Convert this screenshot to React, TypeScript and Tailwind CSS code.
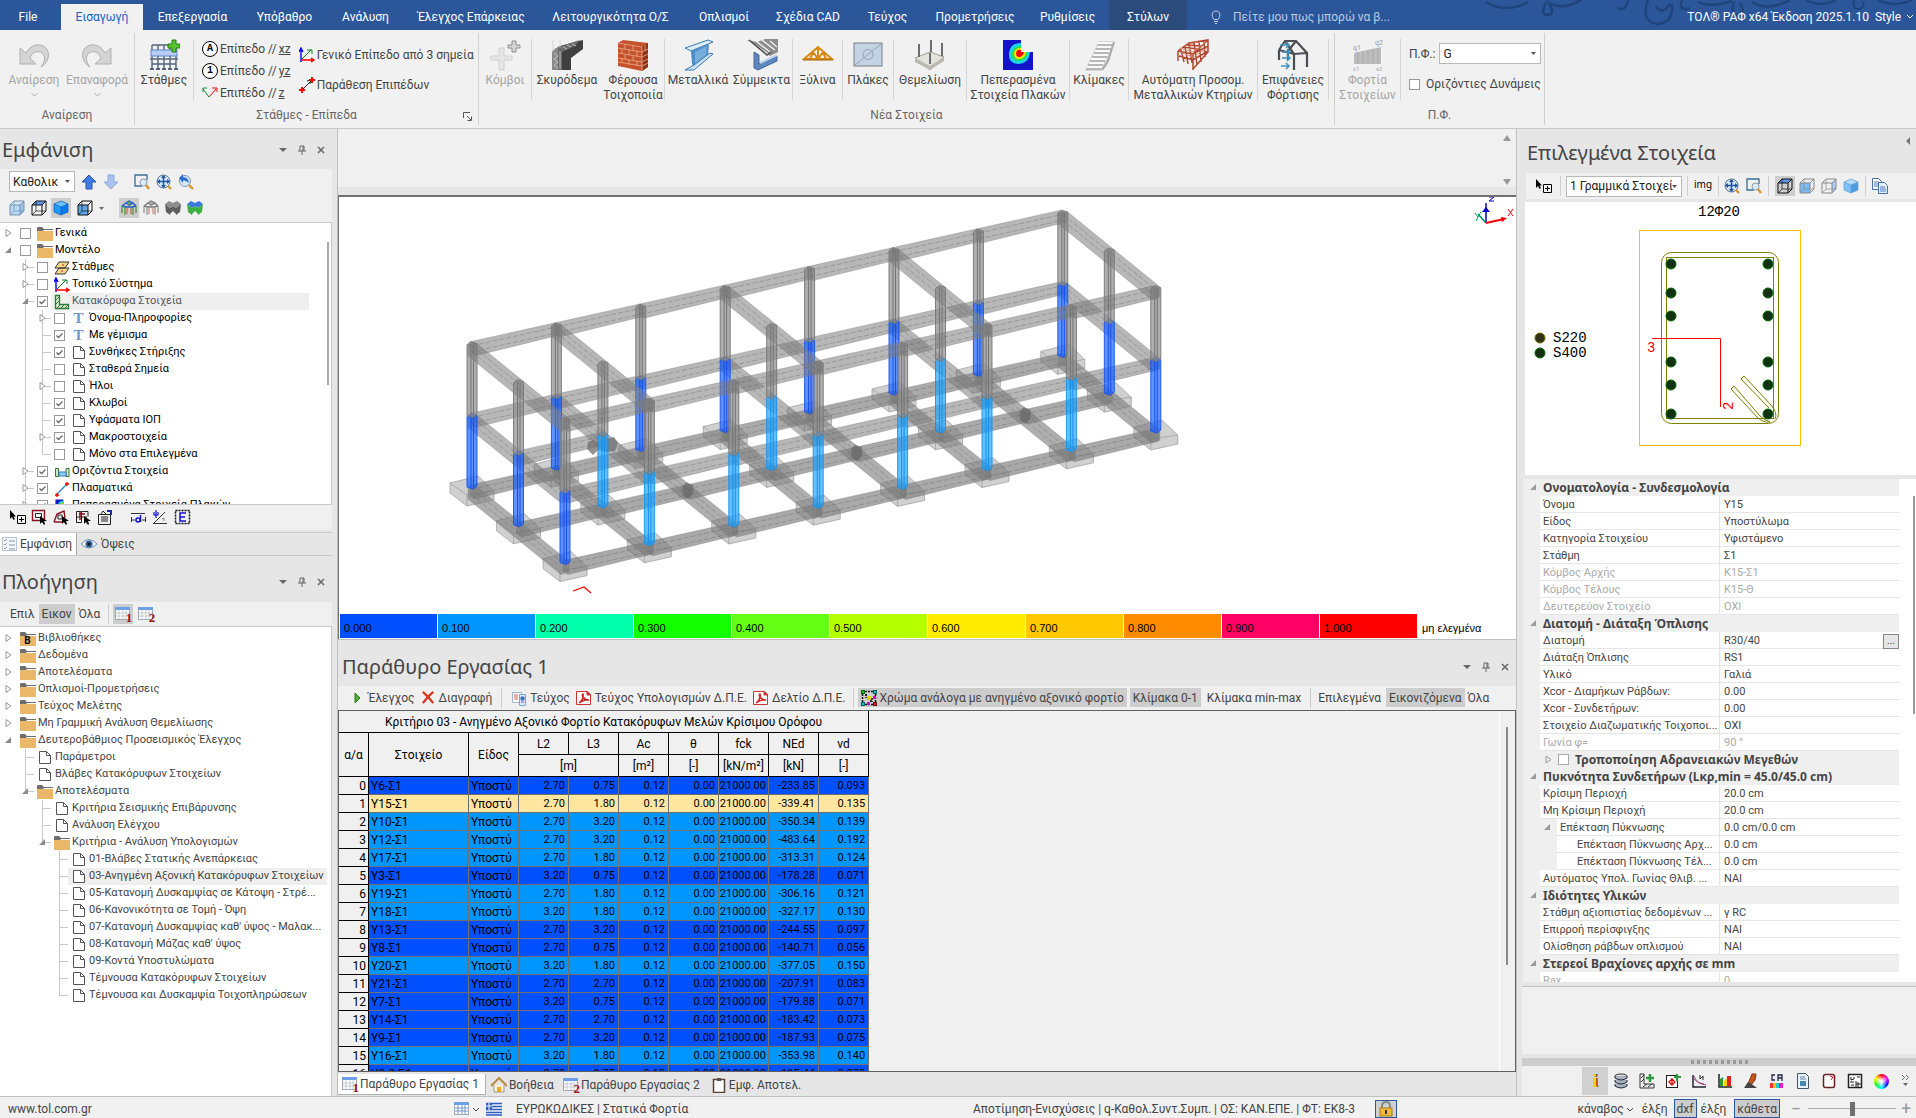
import React from 'react';

type Kids = { children?: React.ReactNode };

/* ---------- icon base ---------- */
const Ico = ({ s = 16, vb = 16, children, w, h }: Kids & { s?: number; vb?: number; w?: number; h?: number }) => (
  <svg width={w ?? s} height={h ?? s} viewBox={`0 0 ${vb} ${vb}`} fill="none" className="shrink-0" aria-hidden="true">
    {children}
  </svg>
);

const Undo = ({ flip = false }: { flip?: boolean }) => (
  <Ico s={32} vb={32}>
    <g transform={flip ? 'translate(32 0) scale(-1 1)' : undefined}>
      <path d="M2 9L2 25H18L12 19C14 13 20 11 24 14C28 18 27 23 23 28C30 24 33 15 28 9C22 3 12 6 8 14Z" fill="#d4d4d4" stroke="#b0b0b0" strokeLinejoin="round" />
    </g>
  </Ico>
);
const GridPlus = () => (
  <Ico s={32} vb={32}>
    <path d="M4 6h24v20M4 6v24M10 6v24M16 6v24M22 6v24M28 8v22M2 20h28M4 25h24" stroke="#54657a" strokeWidth="1.4" />
    <rect x="3" y="11" width="26" height="6" fill="#b7cdf5" stroke="#5c83c8" />
    <path d="M2 30h4M8 30h4M14 30h4M20 30h4M26 30h4" stroke="#54657a" strokeWidth="2" />
    <path d="M24 1h4v4h4v4h-4v4h-4V9h-4V5h4z" fill="#57c232" stroke="#277a12" />
  </Ico>
);
const CircleMark = ({ t }: { t: string }) => (
  <span className="flex size-4 shrink-0 items-center justify-center rounded-full border border-black bg-white font-['Liberation_Mono'] text-[10px] font-bold leading-none text-black">{t}</span>
);
const VMark = () => (
  <Ico><path d="M1 4l6 8" stroke="#11893a" /><path d="M1 7V3h4" stroke="#11893a" /><path d="M7 12l7-8" stroke="#e00" /><path d="M10 3h5v4" stroke="#e00" /></Ico>
);
const Axes = () => (
  <Ico><path d="M2 15V3M0 5l2-4 2 4" stroke="#00f" strokeWidth="1.4" /><path d="M2 13h12M12 11l3 2-3 2" stroke="#f00" strokeWidth="1.4" /><path d="M3 12l9-9M8 3h5v4" stroke="#0a7a2a" /></Ico>
);
const TwoPts = () => (
  <Ico><path d="M3 13L13 3M8 4l4-1-1 4" stroke="#222" /><path d="M0 13h6M3 10v6M10 3h6M13 0v6" stroke="#f00" strokeWidth="2" /></Ico>
);
const Nodes = () => (
  <Ico s={32} vb={32}>
    <path d="M10 9h5v8h8v4h-8v10h-5V21H2v-4h8z" fill="#e6e6e6" stroke="#d0d0d0" />
    <path d="M23 2h4v4h4v3h-4v4h-4V9h-4V6h4z" fill="#d6d6d6" stroke="#8e8e8e" />
  </Ico>
);
const Concrete = () => (
  <Ico s={32} vb={32}>
    <path d="M4 10l5-3 23-6v9l-12 9v12H11L4 31z" fill="#3f3f3f" />
    <path d="M1 12l6-4v23H1z" fill="#8a8a8a" /><path d="M7 8l22-7-5 6-13 6v18H7z" fill="#6b6b6b" />
    <path d="M2 1v12M9 0v9M3 14l4 3-4 3 4 3-4 3 4 3M9 12v18M12 8l4 2M16 6l4 2M21 5l4 2" stroke="#d0d0d0" strokeWidth=".8" />
  </Ico>
);
const Bricks = () => (
  <Ico s={32} vb={32}>
    <path d="M1 4l5-3 25 3v24l-6 4-24-5z" fill="#c4532d" />
    <path d="M25 8l6-4v24l-6 4z" fill="#8f3318" />
    <path d="M1 4l24 4v24M1 9l24 4 6-3M1 14l24 4 6-3M1 19l24 4 6-3M1 23l24 4 6-3M8 5v5M16 7v5M5 10v5M12 11v5M20 12v5M8 15v5M16 17v5M5 19v5M12 21v5M20 22v5M28 6v6" stroke="#e9a080" strokeWidth=".9" />
  </Ico>
);
const Steel = () => (
  <Ico s={32} vb={32}>
    <path d="M3 9l23-8 5 2L9 12z" fill="#dcecf8" stroke="#3b78ad" />
    <path d="M9 12l18-7-1 12-14 11-2-3z" fill="#4f8fc7" /><path d="M13 13l12-6-1 9-11 9z" fill="#76aedb" />
    <path d="M3 31l9-5 16-12 3 1-19 16z" fill="#c7e0f4" stroke="#3b78ad" />
  </Ico>
);
const Composite = () => (
  <Ico s={32} vb={32}>
    <path d="M1 1l10 2 8-3h13v13l-8 4z" fill="#8c8c8c" /><path d="M3 2l19 13M10 2l14 11M16 1l13 10M24 2l7 6" stroke="#f2f2f2" strokeWidth="1.4" /><path d="M3 1l18 15 4-3" stroke="#4d4d4d" strokeWidth="1.5" />
    <path d="M8 13l5 3v9l18-8v5L12 31l-4-2z" fill="#5c86bd" stroke="#406a9f" /><path d="M14 24l17-8" stroke="#bcd5ef" strokeWidth="2" />
  </Ico>
);
const Truss = () => (
  <Ico s={32} vb={32}><path d="M2 20L16 8l14 12zM16 8v12M8 20l3-7 5 7 5-7 3 7" stroke="#d98912" strokeWidth="2" /><path d="M1 21h30" stroke="#a4640a" /></Ico>
);
const Slab = () => (
  <Ico s={32} vb={32}><rect x="2" y="4" width="28" height="23" fill="#c4d3e4" stroke="#7b7f86" /><path d="M3 26L29 5" stroke="#8795a5" strokeWidth=".8" /><circle cx="16" cy="15.500" r="5" stroke="#8795a5" strokeWidth=".8" /></Ico>
);
const Footing = () => (
  <Ico s={32} vb={32}><path d="M1 19l15-6 14 5-14 13z" fill="#e4e4de" stroke="#9b9b95" /><path d="M1 19v4l15 8 14-9v-4L16 27z" fill="#b9b9b2" /><path d="M5 5v13M16 14v11M17 1v12M28 4v13" stroke="#6d6d6d" strokeWidth="2" /></Ico>
);
const Heat = ({ s = 32 }: { s?: number }) => (
  <Ico s={s} vb={32}>
    <path d="M1 1h18v12h12v18H1z" fill="#1414c8" />
    <path d="M7 14Q8 4 19 4v9h9Q27 24 17 25 6 25 7 14" fill="#19d3ef" />
    <path d="M10 14q1-7 9-7v6h7q-2 9-9 9-8 0-7-8" fill="#2be04c" />
    <path d="M12 14q1-5 7-5v4h5q-1 7-7 7-5 0-5-6" fill="#ffe500" />
    <path d="M14 14q1-4 5-3v2h3q-1 5-5 5-3 0-3-4" fill="#f00" />
  </Ico>
);
const Stairs = () => (
  <Ico s={32} vb={32}>
    <path d="M16 2h15l-2 5-3 12-3 9-5 4H2l3-8 4-8 4-9z" fill="#d5d5d5" />
    <path d="M15 4h15M14 8h15M12 12h15M10 16h15M8 20h15M6 24h15M4 28h15" stroke="#fafafa" strokeWidth="2" />
    <path d="M15 6h15M13 10h15M11 14h15M9 18h15M7 22h15M5 26h15M3 30h15" stroke="#9a9a9a" />
    <path d="M31 3l-6 19-6 9" stroke="#a8a8a8" strokeWidth="2" />
  </Ico>
);
const Building = () => (
  <Ico s={32} vb={32}>
    <path d="M1 12L12 4l19-3v12L16 30M1 12v10M31 1L16 15M16 15v16M1 12l15 3 15-8M4 11l3 12M8 8l3 17M12 4l3 20M17 3l3 23M22 3l2 20M27 2l1 16M6 8l14 2M10 6l14 1M2 17l14 4 15-9" stroke="#b2482f" strokeWidth="1.5" />
    <path d="M2 9l14 4L29 3M3 13l13 5 14-9" stroke="#d98a76" />
  </Ico>
);
const LoadSurf = () => (
  <Ico s={32} vb={32}>
    <path d="M2 11L8 2h11l11 12v14M2 11v10M2 11l15 4 13-1M8 2l9 13v16M19 2l-8 10v9" stroke="#4a4d52" strokeWidth="2.2" />
    <path d="M3 6h8M9 3l3 3-3 3M5 13h8M10 10l3 3-3 3M5 19h8M10 16l3 3-3 3M4 27h8M9 24l3 3-3 3" stroke="#3c94c2" strokeWidth="1.6" />
  </Ico>
);
const LoadEl = () => (
  <svg width="32" height="32" viewBox="0 0 32 32" className="shrink-0" aria-hidden="true">
    <path d="M2 14L29 8v17H2z" fill="#bdbdbd" /><path d="M6 13v12M11 12v13M16 11v14M21 10v15M26 9v16" stroke="#a9a9a9" />
    <text x="1" y="11" fontSize="7" fill="#999">q1</text><text x="23" y="6" fontSize="7" fill="#999">q2</text><text x="1" y="32" fontSize="6" fill="#aaa">x1</text><text x="24" y="32" fontSize="6" fill="#aaa">x2</text>
  </svg>
);

const Cube = ({ top = 'none', front = 'none', side = 'none', stroke = '#111' }: { top?: string; front?: string; side?: string; stroke?: string }) => (
  <Ico>
    <path d="M1 5L5 1h10l-4 4z" fill={top} /><path d="M1 5h10v10H1z" fill={front} /><path d="M11 5l4-4v10l-4 4z" fill={side} />
    <path d="M1 5h10v10H1zM1 5l4-4h10l-4 4M15 1v10l-4 4" stroke={stroke} /><path d="M5 1v10h10M5 11l-4 4" stroke={stroke} strokeWidth=".7" />
  </Ico>
);
const SolidCube = ({ soft = false }: { soft?: boolean }) => (
  <Ico><path d="M1 4l7-3 7 3-7 3z" fill={soft ? '#b5dcff' : '#6cc4ff'} /><path d="M1 4l7 3v8l-7-3z" fill={soft ? '#7cc2fa' : '#1f9bff'} /><path d="M15 4L8 7v8l7-3z" fill={soft ? '#4f9cdd' : '#0b7bec'} /><path d="M1 4l7-3 7 3-7 3zM1 4v8l7 3 7-3V4M8 7v8" stroke={soft ? '#5b9ad5' : '#0a58b8'} strokeWidth=".7" /></Ico>
);
const Arrow = ({ down = false }: { down?: boolean }) => (
  <Ico><path d={down ? 'M8 15l7-7h-4V1H5v7H1z' : 'M8 1l7 7h-4v7H5V8H1z'} fill={down ? '#a9c2ee' : '#3f7be0'} stroke={down ? '#90a9da' : '#2259ae'} /></Ico>
);
const ZoomBox = () => (
  <Ico><path d="M8 12H1V1h12v5" stroke="#3c6e94" strokeWidth="1.300" /><circle cx="9.500" cy="8.500" r="3.500" fill="#dcebf8" stroke="#8a97a8" /><path d="M12 11l3 4" stroke="#d9952c" strokeWidth="2.400" /></Ico>
);
const ZoomFit = () => (
  <Ico><circle cx="7.500" cy="7.500" r="6.500" fill="#d5e6f7" stroke="#5b7594" /><path d="M7.500 2v11M2 7.500h11" stroke="#1f55a0" strokeWidth="1.500" /><path d="M7.500 1l2.500 3H5zM7.500 14L5 11h5zM1 7.500L4 5v5zM14 7.500L11 10V5z" fill="#1f55a0" /><path d="M12 12l3 3" stroke="#d9952c" strokeWidth="2.400" /></Ico>
);
const ZoomBack = () => (
  <Ico><circle cx="7" cy="7" r="5.500" fill="#d5e6f7" stroke="#8298b3" /><path d="M1 4l4-4v3q5 0 6 6-3-3-6-2.500V9z" fill="#2f6fd0" /><path d="M11 11l4 4" stroke="#d9952c" strokeWidth="2.400" /></Ico>
);
const Frame = ({ a, b, c }: { a: string; b: string; c: string }) => (
  <Ico><path d="M1 6l4-3 3-2 4 2 3 3M1 6l4 1h6l4-1M5 3l3 2 4-2" stroke={a} strokeWidth="1.400" /><path d="M1 6v7M4 7v8M12 7v8M15 6v7M8 1v5" stroke={b} strokeWidth="1.300" /><path d="M6 8v6M10 8v6M1 10v1M15 10v1" stroke={c} strokeWidth="1.300" /></Ico>
);
const Solid = ({ a, b }: { a: string; b: string }) => (
  <Ico><path d="M0 4l4-3 4 2 4-2 4 3-5 4-3-2-3 2z" fill={a} /><path d="M0 4l5 4v7l-4-3zM16 4l-5 4v7l4-3zM5 8l3-2 3 2v6l-3-3-3 3z" fill={b} /></Ico>
);
const Folder = ({ b = false }: { b?: boolean }) => (
  <span className="relative block h-[14px] w-4">
    <svg width="16" height="14" viewBox="0 0 16 14" aria-hidden="true"><path d="M0 3h6l1 1H0zM0 1q0-1 1-1h4l2 2h9v1H0z" fill="#6e6e6e" /><rect y="4" width="16" height="10" fill="#ebb768" /></svg>
    {b && <span className="absolute inset-x-0 top-[3px] text-center text-[10px] font-bold leading-[11px] text-black">B</span>}
  </span>
);
const Page = () => (
  <svg width="12" height="13" viewBox="0 0 12 13" fill="#fff" aria-hidden="true"><path d="M.5.5h7l4 4v8H.5zM7.500.5v4h4" stroke="#555" /></svg>
);
const TIcon = () => <span className="font-['Liberation_Serif'] text-[15px] font-bold leading-[15px] text-[#7094cc]">T</span>;
const Levels = () => (<Ico><path d="M5 2h10l-4 6H1zM5 8h10l-4 6H1z" fill="#f5d98a" stroke="#333" /><path d="M8 5h2M7 11h2" stroke="#c22" /></Ico>);
const VertEl = () => (<Ico><path d="M1.500 1.500h4v9h9v4h-13z" fill="#d8efd4" stroke="#2c7a35" strokeWidth="1.300" /><path d="M2 6l3-3M2 10l3-3M3 14l4-4M7 14l4-4M11 14l3-3" stroke="#2c7a35" /></Ico>);
const HorEl = () => (<Ico><path d="M1.500 4.500h3v8h-3zM12 4.500h3v8h-3z" fill="#cfe9ca" stroke="#2c7a35" /><path d="M5 8h7v4H5z" fill="#8fd0f5" stroke="#3378b5" /></Ico>);
const PlateEl = () => (<Ico><path d="M3 13L13 3" stroke="#2a86d0" strokeWidth="1.300" /><path d="M1 14h4M3 12v4M11 3h4M13 1v4" stroke="#e00" strokeWidth="1.300" /></Ico>);
const Table = ({ n }: { n?: string }) => (
  <span className="relative block size-4 shrink-0">
    <Ico><rect x=".5" y="1.500" width="14" height="12" fill="#fff" stroke="#a0a8b8" /><path d="M0 1h15v3H0z" fill="#6c9fe8" /><path d="M1 7h13M1 10h13M4 4v9M8 4v9M11 4v9" stroke={n ? '#b8c0cc' : '#5580c0'} strokeWidth=".8" /></Ico>
    {n && <span className="absolute -right-px bottom-0 font-['Liberation_Serif'] text-[13px] font-bold leading-[9px] text-[#a0101c]">{n}</span>}
  </span>
);
const Cursor = ({ children }: Kids) => (<Ico s={17} vb={17}>{children}<path d="M9 7v8l2-2 2 3 1-1-1-3h3z" fill="#000" /></Ico>);
const CursorAdd = () => (<Ico s={17} vb={17}><path d="M1 1v9l2-2 1.500 3 1.500-1-1.500-2.500H7z" fill="#000" /><path d="M8.500 6.500h8v8h-8zM12.500 8v5M10 10.500h5" stroke="#000" /></Ico>);
const Pdf = () => (<Ico><path d="M.5 1.500h11l3 3v10H.5z" fill="#fff" stroke="#c33" /><path d="M3 13c3-2 5-6 4-9-2 0 0 6 6 6-4-1-7 1-10 3" stroke="#d32222" strokeWidth="1.500" /><path d="M11 1v4h4" fill="#d33" stroke="#c33" /></Ico>);
const Doc = () => (<Ico><path d="M1.500 2.500h9v10h-9z" fill="#fff" stroke="#9fb2cc" /><path d="M3 5h4M3 7h4M3 9h4" stroke="#d0614c" /><path d="M8.500 4.500h6v11h-6z" fill="#dce9fa" stroke="#86a1c8" /><path d="M10 7h3v3h-3zM10 12h3" fill="#3c6ec0" stroke="#3c6ec0" /></Ico>);
const Copy = () => (<Ico><path d="M.5.5h6l3 3v8h-9z" fill="#fff" stroke="#4a6fa5" /><path d="M2 4h5M2 6h5M2 8h4" stroke="#4a7cc5" /><path d="M6.500 4.500h6l3 3v8h-9z" fill="#e4eefa" stroke="#4a6fa5" /><path d="M8 9h5M8 11h6M8 13h6" stroke="#4a7cc5" /></Ico>);

/* drop-down with a small flat arrow */
const Drop = ({ label, text, w }: { label: string; text: string; w: string }) => (
  <span className={`relative ${w} shrink-0`}>
    <select aria-label={label} className="block h-[21px] w-full appearance-none border border-[#b8b8b8] bg-white px-[3px] text-xs text-[#222]"><option>{text}</option></select>
    <svg className="pointer-events-none absolute right-1 top-2" width="7" height="5" viewBox="0 0 7 5" aria-hidden="true"><path d="M1 1h5L3.500 4z" fill="#555" /></svg>
  </span>
);

const PanelButtons = () => (
  <div className="flex items-center gap-[9px] text-[#666]">
    <button aria-label="Μενού"><Ico s={10} vb={10}><path d="M1 3h8L5 7z" fill="#666" /></Ico></button>
    <button aria-label="Καρφίτσωμα"><Ico s={10} vb={10}><path d="M3 1h4v5M3 1v5M6 1v5M1 6h8M5 6v4" stroke="#666" /></Ico></button>
    <button aria-label="Κλείσιμο"><Ico s={10} vb={10}><path d="M2 2l6 6M8 2L2 8" stroke="#666" strokeWidth="1.500" /></Ico></button>
  </div>
);

/* ---------- title bar ---------- */
const tabs: [string, string][] = [
  ['File', 'w-[56px]'], ['Εισαγωγή', 'w-[82px]'], ['Επεξεργασία', 'w-[99px]'], ['Υπόβαθρο', 'w-[85px]'], ['Ανάλυση', 'w-[77px]'],
  ['Έλεγχος Επάρκειας', 'w-[134px]'], ['Λειτουργικότητα Ο/Σ', 'w-[145px]'], ['Οπλισμοί', 'w-[82px]'], ['Σχέδια CAD', 'w-[86px]'],
  ['Τεύχος', 'w-[73px]'], ['Προμετρήσεις', 'w-[102px]'], ['Ρυθμίσεις', 'w-[83px]'], ['Στύλων', 'w-[78px]'],
];
const TitleBar = () => (
  <header className="relative flex h-[30px] shrink-0 items-end overflow-hidden bg-[#2b579a] text-xs text-white">
    <svg className="absolute right-0 top-0" width="440" height="30" viewBox="0 0 440 30" fill="none" stroke="#1f447c" strokeWidth="2.500" aria-hidden="true">
      <path d="M10 2q20 12 42 0M70 3q-6 12 1 12 9 0 2-12q14 8 32-3M152 0q-2 12-10 8M172 0q-8 22 10 24 16-2 14-20M180 6q6 10 14-2M206 0q-4 12 8 8M222 2q12 6 34-1M258 2q-4 13 4 13 8-3 2-12M276 2q16 10 38-2" />
      <path d="M330 0q14 8 30 0M378 0q-2 10 6 9 6-3 2-8M402 0q16 8 34 0" strokeWidth="2" />
    </svg>
    <nav className="flex items-end pr-6" aria-label="Κορδέλα">
      {tabs.map(([t, w], i) => (
        <button key={t} className={`${w} ${i === 0 ? 'mr-[5px] h-[26px]' : i === 1 ? 'h-[26px] bg-[#f1f1f1] text-[#1c62c5]' : i === 12 ? 'h-[30px] bg-[#2a4b7c] pt-1' : 'h-[26px]'} whitespace-nowrap text-center`}>{t}</button>
      ))}
    </nav>
    <label className="flex h-[26px] items-center gap-3 text-[#b9c9e2]">
      <svg width="10" height="14" viewBox="0 0 10 14" fill="none" stroke="#c5d2e8" aria-hidden="true"><path d="M3 9.500C0 6 .5 1 5 1s5 5 2 8.500zM3 11.500h4M4 13.500h2" /></svg>
      <input readOnly value="Πείτε μου πως μπορώ να β..." className="w-[200px] bg-transparent outline-none" aria-label="Αναζήτηση εντολής" />
    </label>
    <div className="relative ml-auto flex h-[26px] items-center gap-1.5 pr-0.5">
      <span>ΤΟΛ® ΡΑΦ x64 Έκδοση 2025.1.10</span>
      <button className="flex items-center gap-[5px]">Style<svg width="8" height="8" viewBox="0 0 8 8" fill="none" stroke="#fff" aria-hidden="true"><path d="M1 2l3 3 3-3" /></svg></button>
    </div>
  </header>
);

/* ---------- ribbon ---------- */
const Big = ({ icon, l1, l2, w, off = false }: { icon: React.ReactNode; l1: string; l2?: string; w: string; off?: boolean }) => (
  <button disabled={off} className={`flex ${w} shrink-0 flex-col items-center self-start whitespace-nowrap ${off ? 'text-[#a5a5a5]' : 'text-[#444]'}`}>
    {icon}
    <span className="mt-0.5 leading-[15px]">{l1}</span>
    {l2 && <span className="leading-[15px]">{l2}</span>}
  </button>
);
const Sep = () => <div className="h-[61px] w-px shrink-0 bg-[#d5d5d5]" />;
const Group = ({ label, w, children, launcher = false }: Kids & { label: string; w: string; launcher?: boolean }) => (
  <section className={`${w} relative my-[3px] flex shrink-0 flex-col border-r border-[#d0d0d0]`}>
    <div className="flex h-[68px] pt-1.5">{children}</div>
    <div className="mt-1.5 text-center leading-4 text-[#666]">{label}</div>
    {launcher && <button aria-label="Επιλογές" className="absolute bottom-1 right-1.5"><Ico s={9} vb={9}><path d="M.5 6V.5H7M4 4l4 4M8.500 4.500v4h-4" stroke="#555" /></Ico></button>}
  </section>
);
const Chev = () => <svg width="7" height="5" viewBox="0 0 7 5" fill="none" stroke="#aaa" className="mt-1" aria-hidden="true"><path d="M.5 1l3 3 3-3" /></svg>;

const Ribbon = () => (
  <div className="flex h-[99px] shrink-0 border-b border-[#c8c8c8] bg-[#f1f1f1] text-xs">
    <Group label="Αναίρεση" w="w-[135px]">
      <div className="flex flex-col items-center pl-1"><Big icon={<Undo />} l1="Αναίρεση" w="w-[60px]" off /><Chev /></div>
      <div className="flex flex-col items-center"><Big icon={<Undo flip />} l1="Επαναφορά" w="w-[66px]" off /><Chev /></div>
    </Group>
    <Group label="Στάθμες - Επίπεδα" w="w-[344px]" launcher>
      <Big icon={<GridPlus />} l1="Στάθμες" w="w-[58px]" /><Sep />
      <div className="flex flex-col gap-1.5 pl-2 pt-0.5 text-[#444]">
        <button className="flex h-4 items-center gap-0.5"><CircleMark t="A" />Επίπεδο // <u>xz</u></button>
        <button className="flex h-4 items-center gap-0.5"><CircleMark t="1" />Επίπεδο // <u>yz</u></button>
        <button className="flex h-4 items-center gap-0.5"><VMark />Επιπέδο // <u>z</u></button>
      </div>
      <div className="flex flex-col gap-3.5 whitespace-nowrap pl-2 pt-2 text-[#444]">
        <button className="flex h-4 items-center gap-0.5"><Axes />Γενικό Επίπεδο από 3 σημεία</button>
        <button className="flex h-4 items-center gap-0.5"><TwoPts />Παράθεση Επιπέδων</button>
      </div>
    </Group>
    <Group label="Νέα Στοιχεία" w="w-[856px]">
      <Big icon={<Nodes />} l1="Κόμβοι" w="w-[52px]" off /><Sep />
      <Big icon={<Concrete />} l1="Σκυρόδεμα" w="w-[70px]" />
      <Big icon={<Bricks />} l1="Φέρουσα" l2="Τοιχοποιία" w="w-[62px]" /><Sep />
      <Big icon={<Steel />} l1="Μεταλλικά" w="w-[66px]" />
      <Big icon={<Composite />} l1="Σύμμεικτα" w="w-[61px]" /><Sep />
      <Big icon={<Truss />} l1="Ξύλινα" w="w-[49px]" /><Sep />
      <Big icon={<Slab />} l1="Πλάκες" w="w-[50px]" /><Sep />
      <Big icon={<Footing />} l1="Θεμελίωση" w="w-[72px]" /><Sep />
      <Big icon={<Heat />} l1="Πεπερασμένα" l2="Στοιχεία Πλακών" w="w-[102px]" /><Sep />
      <Big icon={<Stairs />} l1="Κλίμακες" w="w-[58px]" /><Sep />
      <Big icon={<Building />} l1="Αυτόματη Προσομ." l2="Μεταλλικών Κτηρίων" w="w-[128px]" /><Sep />
      <Big icon={<LoadSurf />} l1="Επιφάνειες" l2="Φόρτισης" w="w-[70px]" /><Sep />
    </Group>
    <Group label="Π.Φ." w="w-[210px]">
      <Big icon={<LoadEl />} l1="Φορτία" l2="Στοιχείων" w="w-[65px]" off /><Sep />
      <div className="flex flex-col gap-3 pl-2 pt-1 text-[#444]">
        <div className="flex items-center gap-1">Π.Φ.:<Drop label="Π.Φ." text="G" w="w-[102px]" /></div>
        <label className="flex items-center gap-1.5"><input type="checkbox" className="size-[11px] appearance-none border border-[#999] bg-white" />Οριζόντιες Δυνάμεις</label>
      </div>
    </Group>
  </div>
);

/* ---------- trees ---------- */
type Row = { g: string; e?: 'o' | 'c'; c?: boolean; i: React.ReactNode; t: string; sel?: boolean };
const line = 'absolute bg-[#c9c9c9]';
const Cell = ({ k, e }: { k: string; e?: string }) => (
  <span className="relative h-[17px] w-[17px] shrink-0">
    {k !== ' ' && <span className={`${line} left-2 top-0 w-px ${k === 'l' ? 'h-[9px]' : 'h-full'}`} />}
    {(k === 't' || k === 'l') && <span className={`${line} left-2 top-2 h-px w-[9px]`} />}
    {e && (
      <svg className="absolute left-1 top-1" width="9" height="9" viewBox="0 0 9 9" aria-hidden="true">
        {e === 'c' ? <path d="M2 .5v7L7 4z" fill="#fff" stroke="#9a9a9a" /> : <path d="M7 1v6H1z" fill="#8a8a8a" />}
      </svg>
    )}
  </span>
);
const TreeRow = ({ r, check }: { r: Row; check?: boolean }) => (
  <li className="flex h-[17px] items-center whitespace-nowrap">
    {r.g.split('').map((k, i) => <Cell key={i} k={k} e={i === r.g.length - 1 ? r.e : undefined} />)}
    <label className={`flex h-[17px] min-w-0 flex-1 items-center ${r.sel && !check ? 'bg-[#efefef]' : ''}`}>
      {check && (
        <span className="relative flex w-[17px] shrink-0 justify-center">
          <input type="checkbox" defaultChecked={r.c} className="peer size-[11px] appearance-none border border-[#999] bg-white" />
          <svg className="pointer-events-none invisible absolute left-[5px] top-[3px] peer-checked:visible" width="7" height="6" viewBox="0 0 7 6" fill="none" aria-hidden="true"><path d="M.5 2.500L2.500 4.500 6.500.5" stroke="#666" strokeWidth="1.300" /></svg>
        </span>
      )}
      <span className={`flex h-[17px] min-w-0 flex-1 items-center ${r.sel && check ? 'bg-[#efefef] text-[#555]' : ''}`}>
        <span className="flex w-[21px] shrink-0 justify-center">{r.i}</span>
        <span className="truncate">{r.t}</span>
      </span>
    </label>
  </li>
);

const F = <Folder />, D = <Page />;
const display: Row[] = [
  { g: ' ', e: 'c', i: F, t: 'Γενικά' }, { g: ' ', e: 'o', i: F, t: 'Μοντέλο' },
  { g: ' t', e: 'c', i: <Levels />, t: 'Στάθμες' }, { g: ' t', e: 'c', i: <Axes />, t: 'Τοπικό Σύστημα' },
  { g: ' t', e: 'o', c: true, i: <VertEl />, t: 'Κατακόρυφα Στοιχεία', sel: true },
  { g: ' |t', e: 'c', i: <TIcon />, t: 'Όνομα-Πληροφορίες' }, { g: ' |t', c: true, i: <TIcon />, t: 'Με γέμισμα' },
  { g: ' |t', c: true, i: D, t: 'Συνθήκες Στήριξης' }, { g: ' |t', i: D, t: 'Σταθερά Σημεία' }, { g: ' |t', e: 'c', i: D, t: 'Ήλοι' },
  { g: ' |t', c: true, i: D, t: 'Κλωβοί' }, { g: ' |t', c: true, i: D, t: 'Υφάσματα ΙΟΠ' }, { g: ' |t', e: 'c', c: true, i: D, t: 'Μακροστοιχεία' },
  { g: ' |l', i: D, t: 'Μόνο στα Επιλεγμένα' },
  { g: ' t', e: 'c', c: true, i: <HorEl />, t: 'Οριζόντια Στοιχεία' }, { g: ' t', e: 'c', c: true, i: <PlateEl />, t: 'Πλασματικά' },
  { g: ' t', e: 'c', c: true, i: <Heat s={14} />, t: 'Πεπερασμένα Στοιχεία Πλακών' },
];
const navigation: Row[] = [
  { g: ' ', e: 'c', i: <Folder b />, t: 'Βιβλιοθήκες' }, { g: ' ', e: 'c', i: F, t: 'Δεδομένα' }, { g: ' ', e: 'c', i: F, t: 'Αποτελέσματα' },
  { g: ' ', e: 'c', i: F, t: 'Οπλισμοί-Προμετρήσεις' }, { g: ' ', e: 'c', i: F, t: 'Τεύχος Μελέτης' }, { g: ' ', e: 'c', i: F, t: 'Μη Γραμμική Ανάλυση Θεμελίωσης' },
  { g: ' ', e: 'o', i: F, t: 'Δευτεροβάθμιος Προσεισμικός Έλεγχος' },
  { g: ' t', i: D, t: 'Παράμετροι' }, { g: ' t', i: D, t: 'Βλάβες Κατακόρυφων Στοιχείων' }, { g: ' l', e: 'o', i: F, t: 'Αποτελέσματα' },
  { g: '  t', i: D, t: 'Κριτήρια Σεισμικής Επιβάρυνσης' }, { g: '  t', i: D, t: 'Ανάλυση Ελέγχου' }, { g: '  l', e: 'o', i: F, t: 'Κριτήρια - Ανάλυση Υπολογισμών' },
  { g: '   t', i: D, t: '01-Βλάβες Στατικής Ανεπάρκειας' }, { g: '   t', i: D, t: '03-Ανηγμένη Αξονική Κατακόρυφων Στοιχείων', sel: true },
  { g: '   t', i: D, t: '05-Κατανομή Δυσκαμψίας σε Κάτοψη - Στρέ...' }, { g: '   t', i: D, t: '06-Κανονικότητα σε Τομή - Όψη' },
  { g: '   t', i: D, t: "07-Κατανομή Δυσκαμψίας καθ' ύψος - Μαλακ..." }, { g: '   t', i: D, t: "08-Κατανομή Μάζας καθ' ύψος" },
  { g: '   t', i: D, t: '09-Κοντά Υποστυλώματα' }, { g: '   t', i: D, t: 'Τέμνουσα Κατακόρυφων Στοιχείων' }, { g: '   l', i: D, t: 'Τέμνουσα και Δυσκαμψία Τοιχοπληρώσεων' },
];

const LeftColumn = () => (
  <aside className="flex w-[332px] shrink-0 flex-col">
    <div className="flex h-10 items-center justify-between pr-1.5 pt-0.5">
      <h2 className="pl-0.5 font-['Noto_Sans'] text-xl text-[#444]">Εμφάνιση</h2><PanelButtons />
    </div>
    <div className="flex h-[54px] shrink-0 flex-col gap-1.5 border-b border-[#c8c8c8] bg-[#f0f0f0] px-[9px] pt-0.5">
      <div className="flex h-[21px] items-center gap-1.5">
        <Drop label="Σύστημα" text="Καθολικ" w="w-[66px]" />
        <button aria-label="Πάνω"><Arrow /></button><button aria-label="Κάτω"><Arrow down /></button>
        <span className="w-[3px]" />
        <button aria-label="Παράθυρο"><ZoomBox /></button><button aria-label="Όλα"><ZoomFit /></button><button aria-label="Προηγούμενο"><ZoomBack /></button>
      </div>
      <div className="flex h-5 items-center gap-1.5">
        <button aria-label="Διαφανές"><Cube front="#b9d9f5" top="#d5e9fb" side="#9cc5ea" stroke="#7391b0" /></button>
        <button aria-label="Κάτοψη"><Cube top="#5f97ee" /></button>
        <button aria-label="Στερεό" className="-mx-0.5 bg-[#cdcdcd] p-0.5"><SolidCube /></button>
        <button aria-label="Όψη" className="ml-0.5 flex items-center"><Cube front="#5fa5ea" /><Ico s={16} vb={16}><path d="M6 7h5l-2.500 3z" fill="#666" /></Ico></button>
        <button aria-label="Γραμμές" className="-mr-0.5 ml-1 bg-[#cdcdcd] p-0.5"><Frame a="#2257c9" b="#3f9a3f" c="#d06a50" /></button>
        <button aria-label="Περίγραμμα"><Frame a="#777" b="#999" c="#d09080" /></button>
        <button aria-label="Σκίαση"><Solid a="#8e8e8e" b="#5f5f5f" /></button>
        <button aria-label="Χρώμα"><Solid a="#3a78dd" b="#3fae45" /></button>
      </div>
    </div>
    <div className="flex h-[282px] shrink-0 border-b border-r border-[#c8c8c8] bg-white">
      <ul className="mr-[18px] mt-0.5 min-w-0 flex-1 overflow-hidden text-[11px] text-black">
        {display.map((r) => <TreeRow key={r.t} r={r} check />)}
      </ul>
      <div className="mr-0.5 mt-[19px] h-[143px] w-0.5 bg-[#a8a8a8]" />
    </div>
    <div className="flex h-[25px] shrink-0 items-center gap-[5px] bg-[#f0f0f0] pl-[9px]">
      <button aria-label="Επιλογή"><CursorAdd /></button>
      <button aria-label="Παράθυρο"><Cursor><path d="M1.500 1.500h12v10h-12z" stroke="#8c1020" strokeWidth="1.400" /><path d="M4.500 4.500h6v4h-6z" stroke="#222" /></Cursor></button>
      <button aria-label="Πολύγωνο"><Cursor><path d="M1 13l3-8 7-3 1 7M1 13h9" stroke="#8c1020" strokeWidth="1.400" /><path d="M5 6h4v4H5z" stroke="#222" /></Cursor></button>
      <button aria-label="Τομή"><Cursor><path d="M1.500 2.500h5v11h-5zM7 2.500h6v5M1 8h11" stroke="#222" /><path d="M4 5h6M5 3v8" stroke="#8c1020" strokeWidth="1.400" /></Cursor></button>
      <button aria-label="Φίλτρο"><Ico s={17} vb={17}><path d="M1.500 5.500h12v10h-12zM4 8h7M4 10h7M4 12h7M4 5l2-3 3 3" stroke="#222" /><path d="M10 2h4v4" stroke="#1a2a9a" strokeWidth="2" /></Ico></button>
      <span className="w-1.5" />
      <button aria-label="Διάσταση"><Ico s={17} vb={17}><path d="M1 4.500h14M1.500 8v5M15.500 8v5M2 11h3M12 11h3" stroke="#333" /><circle cx="8" cy="11" r="2" stroke="#11c" strokeWidth="1.500" /><path d="M10.500 6v7" stroke="#11c" strokeWidth="1.500" /></Ico></button>
      <button aria-label="Γωνία"><Ico s={17} vb={17}><path d="M1 14.500h14M2 14L13 3" stroke="#333" /><path d="M2 3v3h4V3M4 1v8" stroke="#11c" strokeWidth="1.200" /><path d="M10 10l2-1v3" stroke="#888" /></Ico></button>
      <button aria-label="Στοιχείο"><Ico s={17} vb={17}><rect x="1.500" y="1.500" width="14" height="13" stroke="#111" strokeDasharray="2 1" strokeWidth="1.500" /><path d="M12 4H6v8h6M6 8h5" stroke="#11c" strokeWidth="1.500" /></Ico></button>
    </div>
    <div className="mt-0.5 flex h-6 shrink-0 items-stretch border-b border-t border-[#c8c8c8] text-xs text-[#444]">
      <button className="flex items-center gap-0.5 border-r border-[#aaa] bg-white px-0.5 pr-1"><Ico><rect x=".5" y="1.500" width="14" height="13" fill="#f4f8fc" stroke="#b9c5d3" /><path d="M2 4l1 1 2-2M2 8l1 1 2-2M2 12l1 1 2-2M7 5h6M7 9h6M7 13h6" stroke="#89a" /></Ico>Εμφάνιση</button>
      <button className="flex items-center gap-1 px-1"><Ico><path d="M0 8q8-9 16 0-8 8-16 0" fill="#eef4fb" stroke="#7a90a8" /><circle cx="8" cy="8" r="3.500" fill="#2c5f9e" /><circle cx="8" cy="8" r="1.500" fill="#111" /></Ico>Όψεις</button>
    </div>
    <div className="mt-1.5 flex h-10 shrink-0 items-center justify-between pr-1.5">
      <h2 className="pl-0.5 font-['Noto_Sans'] text-xl text-[#444]">Πλοήγηση</h2><PanelButtons />
    </div>
    <div className="flex h-[25px] shrink-0 items-center border-b border-[#c8c8c8] bg-[#f0f0f0] pl-2 text-xs text-[#444]">
      <button className="h-5 px-0.5">Επιλ</button><button className="ml-0.5 h-5 bg-[#cdcdcd] px-[3px]">Εικον</button><button className="h-5 px-1">Όλα</button>
      <span className="mx-1 h-5 w-px bg-[#cfcfcf]" />
      <button aria-label="Πίνακας 1" className="bg-[#cdcdcd] p-0.5"><Table n="1" /></button><button aria-label="Πίνακας 2" className="ml-[3px] p-0.5"><Table n="2" /></button>
    </div>
    <div className="min-h-0 flex-1 overflow-hidden border-r border-[#c8c8c8] bg-white">
      <ul className="mr-1 mt-[3px] text-[11px] text-[#444]">{navigation.map((r, i) => <TreeRow key={i} r={r} />)}</ul>
    </div>
  </aside>
);

/* ---------- 3D model ---------- */
type Pt = [number, number];
const node = (i: number, j: number, l: number): Pt => [133 + i * 84.4 + j * 46.5, 290 - i * 18.8 + j * 37.8 - l * 71.6];
const poly = (p: Pt[]) => p.map((q) => q.join(',')).join(' ');
const Beam = ({ a, b, cross = false, o = 0.55 }: { a: Pt; b: Pt; cross?: boolean; o?: number }) => {
  const [dx, dy] = cross ? [-4, 1] : [-2, -2];
  const pts: Pt[] = cross
    ? [[a[0] + dx, a[1] + dy], [a[0] - dx, a[1] - dy], [b[0] - dx, b[1] - dy], [b[0] - dx, b[1] + 9], [b[0] + dx, b[1] + 12], [a[0] + dx, a[1] + 12]]
    : [[a[0] + dx, a[1] + dy], [b[0] + dx, b[1] + dy], [b[0] + 3, b[1] + 1], [b[0] + 3, b[1] + 10], [a[0] + 3, a[1] + 12], [a[0] - 2, a[1] + 9]];
  return (
    <g>
      <polygon points={poly(pts)} fill="#7c7c7c" fillOpacity={o} stroke="#777" strokeOpacity=".5" strokeWidth=".7" />
      <path d={`M${a[0]} ${a[1] + 2}L${b[0]} ${b[1] + 2}M${a[0]} ${a[1] + 8}L${b[0]} ${b[1] + 8}`} stroke="#6a6a6a" strokeOpacity=".6" strokeWidth=".7" strokeDasharray="5 2" />
    </g>
  );
};
const Column = ({ a, b, fill, edge, o }: { a: Pt; b: Pt; fill: string; edge: string; o: number }) => (
  <g>
    <polygon points={poly([[b[0] - 5, b[1] + 1], [b[0] - 1, b[1] - 2], [b[0] + 5, b[1]], [a[0] + 5, a[1] - 1], [a[0] + 1, a[1] + 2], [a[0] - 5, a[1]]])} fill={fill} fillOpacity={o} stroke={edge} strokeWidth=".9" />
    <path d={`M${b[0] - 1} ${b[1]}V${a[1]}M${b[0] + 1.5} ${b[1]}V${a[1]}`} stroke={edge} strokeWidth="1" />
  </g>
);
const spots: [number, number][] = [];
for (let i = 7; i >= 0; i--) for (let j = 0; j < 3; j++) if (j !== 1 || [0, 1, 3, 5, 7].includes(i)) spots.push([i, j]);
const isLight = (i: number, j: number) => j > 0 && i > 0 && i < 7;
const all = [0, 1, 2, 3, 4, 5, 6, 7], main = [0, 1, 3, 5, 7], bays = [0, 1, 2, 3, 4, 5, 6];

const Model = () => (
  <svg width="1176" height="417" viewBox="0 0 1176 417" className="block" fill="none" role="img" aria-label="Τρισδιάστατο μοντέλο">
    {spots.map(([i, j]) => {
      const [x, y] = node(i, j, 0);
      return (
        <g key={`f${i}${j}`} stroke="#999" strokeWidth=".7" fill="#8f8f8f" fillOpacity=".42">
          <polygon points={poly([[x - 22, y - 4], [x + 6, y - 11], [x + 22, y + 4], [x + 22, y + 13], [x - 5, y + 19], [x - 22, y + 6]])} />
          <path d={`M${x - 22} ${y - 4}L${x - 5} ${y + 8}L${x + 22} ${y + 4}M${x - 5} ${y + 8}V${y + 19}`} fill="none" />
        </g>
      );
    })}
    {[0, 1, 2].map((j) => bays.map((i) => <Beam key={`b${i}${j}`} a={node(i, j, 0)} b={node(i + 1, j, 0)} o={0.66} />))}
    {all.map((i) => <Beam key={`c${i}`} a={node(i, 0, 0)} b={node(i, 2, 0)} cross o={0.62} />)}
    {[2, 4, 6].map((i) => { const [x, y] = node(i, 1, 0); return <path key={i} d={`M${x - 5} ${y - 1}l4 -4l7 3v8l-5 6l-6 -4z`} fill="#686868" fillOpacity=".7" />; })}
    {[0, 2].map((j) => bays.map((i) => <Beam key={`d${i}${j}`} a={node(i, j, 1)} b={node(i + 1, j, 1)} />))}
    <Beam a={node(0, 1, 1)} b={node(1, 1, 1)} />
    {main.map((i) => <Beam key={`e${i}`} a={node(i, 0, 1)} b={node(i, 2, 1)} cross />)}
    <path d="M249 245l5-2 5 3 8-4 8-2 4 6-3 8-10 1-7-2-5 5-6-6z" fill="#6f6f6f" fillOpacity=".75" />
    {spots.map(([i, j]) => (
      <Column key={`l${i}${j}`} a={node(i, j, 0)} b={node(i, j, 1)} o={0.68}
        fill={isLight(i, j) ? '#1ea2ff' : '#1560ff'} edge={isLight(i, j) ? '#1292ee' : '#1450ee'} />
    ))}
    {spots.map(([i, j]) => <Column key={`u${i}${j}`} a={node(i, j, 1)} b={node(i, j, 2)} fill="#909090" edge="#747474" o={0.72} />)}
    {[0, 2].map((j) => bays.map((i) => <Beam key={`g${i}${j}`} a={node(i, j, 2)} b={node(i + 1, j, 2)} />))}
    {main.map((i) => <Beam key={`h${i}`} a={node(i, 0, 2)} b={node(i, 2, 2)} cross />)}
    <path d="M234 394l11-4 7 6" stroke="#f00" strokeWidth="1.300" />
    <g strokeWidth="1.500">
      <path d="M1147 26V6" stroke="#00c" /><path d="M1150 0h5l-5 4h5" stroke="#00c" strokeWidth="1" /><path d="M1147 26l18-4" stroke="#f00" strokeWidth="2" /><path d="M1162 20l6 1-5 4z" fill="#f00" /><path d="M1147 26l-8-9" stroke="#087" /><path d="M1143 15h8l-4-5z" fill="#00c" />
      <path d="M1169 12l5 7M1174 12l-5 7" stroke="#f00" strokeWidth="1" /><path d="M1136 16l3 4 3-5M1139 20l-2 4" stroke="#0a5" strokeWidth="1" />
    </g>
  </svg>
);

const legend: [string, string][] = [
  ['0.000', 'bg-[#0050ff]'], ['0.100', 'bg-[#0096ff]'], ['0.200', 'bg-[#00ffaa]'], ['0.300', 'bg-[#14ff00]'], ['0.400', 'bg-[#64ff14]'], ['0.500', 'bg-[#b4ff00]'],
  ['0.600', 'bg-[#ffeb00]'], ['0.700', 'bg-[#ffc800]'], ['0.800', 'bg-[#ff8c00]'], ['0.900', 'bg-[#ff0064]'], ['1.000', 'bg-[#ff0000]'],
];

/* ---------- results table ---------- */
const data: [string, string, string, string, string][] = [
  ['Υ6-Σ1', '2.70', '0.75', '-233.85', '0.093'], ['Υ15-Σ1', '2.70', '1.80', '-339.41', '0.135'], ['Υ10-Σ1', '2.70', '3.20', '-350.34', '0.139'],
  ['Υ12-Σ1', '2.70', '3.20', '-483.64', '0.192'], ['Υ17-Σ1', '2.70', '1.80', '-313.31', '0.124'], ['Υ3-Σ1', '3.20', '0.75', '-178.28', '0.071'],
  ['Υ19-Σ1', '2.70', '1.80', '-306.16', '0.121'], ['Υ18-Σ1', '3.20', '1.80', '-327.17', '0.130'], ['Υ13-Σ1', '2.70', '3.20', '-244.55', '0.097'],
  ['Υ8-Σ1', '2.70', '0.75', '-140.71', '0.056'], ['Υ20-Σ1', '3.20', '1.80', '-377.05', '0.150'], ['Υ21-Σ1', '2.70', '2.70', '-207.91', '0.083'],
  ['Υ7-Σ1', '3.20', '0.75', '-179.88', '0.071'], ['Υ14-Σ1', '2.70', '2.70', '-183.42', '0.073'], ['Υ9-Σ1', '2.70', '3.20', '-187.93', '0.075'],
  ['Υ16-Σ1', '3.20', '1.80', '-353.98', '0.140'], ['Υ2-2-Σ1', '2.70', '0.75', '-195.44', '0.078'],
];
const th = 'border border-black p-0 text-center font-normal';
const td = 'border border-[#707070] px-[3px] py-0 text-right';
const tl = 'border border-[#707070] p-0 pl-0.5 text-left text-xs leading-4 whitespace-nowrap';
const Results = () => (
  <table className="-ml-px -mt-px w-[531px] shrink-0 table-fixed border-collapse self-start bg-[#f0f0f0] text-xs text-black">
    <colgroup>
      <col className="w-[30px]" /><col className="w-[100px]" /><col className="w-[50px]" /><col className="w-[50px]" /><col className="w-[50px]" /><col className="w-[50px]" />
      <col className="w-[50px]" /><col className="w-[50px]" /><col className="w-[50px]" /><col className="w-[50px]" />
    </colgroup>
    <thead>
      <tr className="h-[22px]"><th colSpan={10} className={th}>Κριτήριο 03 - Ανηγμένο Αξονικό Φορτίο Κατακόρυφων Μελών Κρίσιμου Ορόφου</th></tr>
      <tr className="h-[22px]">
        <th rowSpan={2} className={th}>α/α</th><th rowSpan={2} className={th}>Στοιχείο</th><th rowSpan={2} className={th}>Είδος</th>
        {['L2', 'L3', 'Ac', 'θ', 'fck', 'NEd', 'vd'].map((h) => <th key={h} className={th}>{h}</th>)}
      </tr>
      <tr className="h-[22px]">
        <th colSpan={2} className={th}>[m]</th><th className={th}>[m²]</th><th className={th}>[-]</th><th className={th}>[kN/m²]</th><th className={th}>[kN]</th><th className={th}>[-]</th>
      </tr>
    </thead>
    <tbody className="text-[11px]">
      {data.map(([n, l2, l3, ned, vd], i) => (
        <tr key={n} className={`h-[18px] leading-4 ${i === 1 ? 'bg-[#ffe6a0]' : parseFloat(vd) < 0.1 ? 'bg-[#0050ff]' : 'bg-[#0096ff]'}`}>
          <td className="border border-black bg-[#f0f0f0] p-0 pr-0.5 text-right text-xs leading-4">{i}</td>
          <td className={tl}>{n}</td><td className={tl}>Υποστύ</td>
          <td className={td}>{l2}</td><td className={td}>{l3}</td><td className={td}>0.12</td><td className={td}>0.00</td><td className="border border-[#707070] p-0 pr-0.5 text-right">21000.00</td>
          <td className={td}>{ned}</td><td className={td}>{vd}</td>
        </tr>
      ))}
    </tbody>
  </table>
);

const Tool = ({ icon, children, on = false, mx = '' }: Kids & { icon?: React.ReactNode; on?: boolean; mx?: string }) => (
  <button className={`flex h-[19px] shrink-0 items-center gap-[3px] whitespace-nowrap px-[3px] ${mx} ${on ? 'bg-[#cdcdcd]' : ''}`}>{icon}{children}</button>
);

const Center = () => (
  <main className="flex min-w-0 flex-1 flex-col border-x border-[#c0c0c0]">
    <div className="flex h-[58px] shrink-0 flex-col items-end justify-between bg-[#f0f0f0] pb-0 pr-1 pt-1">
      <button aria-label="Κύλιση πάνω"><Ico s={10} vb={10}><path d="M1 8h8L5 2z" fill="#999" /></Ico></button>
      <button aria-label="Κύλιση κάτω"><Ico s={10} vb={10}><path d="M1 2h8L5 8z" fill="#999" /></Ico></button>
    </div>
    <div className="mt-2 flex h-[444px] shrink-0 flex-col overflow-hidden border-l border-t-2 border-[#707070] bg-white">
      <div className="h-[417px] overflow-hidden"><Model /></div>
      <div className="flex h-6 items-center gap-px pl-px font-['Liberation_Sans'] text-[11px] text-black">
        {legend.map(([v, c]) => <div key={v} className={`flex h-6 w-[97px] shrink-0 items-center pl-1 pt-1 ${c}`}>{v}</div>)}
        <span className="pl-1 pt-1">μη ελεγμένα</span>
      </div>
    </div>
    <div className="flex h-[47px] shrink-0 items-center justify-between border-t border-[#c0c0c0] pr-1.5 pt-2">
      <h2 className="pl-1 font-['Noto_Sans'] text-xl text-[#444]">Παράθυρο Εργασίας 1</h2><PanelButtons />
    </div>
    <div className="flex h-6 shrink-0 items-center overflow-hidden bg-[#f0f0f0] pb-px pl-2.5 text-xs text-[#444]">
      <Tool icon={<Ico s={14} vb={14}><path d="M4 2l5 5-5 5z" fill="#4caf35" stroke="#2c7a1c" /></Ico>}>Έλεγχος</Tool>
      <Tool icon={<Ico s={15} vb={16}><path d="M2 2q6 5 11 12M13 2Q7 7 2 14" stroke="#d9381e" strokeWidth="2.500" /></Ico>}>Διαγραφή</Tool>
      <span className="mx-1.5 h-5 w-px bg-[#ccc]" />
      <Tool icon={<Doc />}>Τεύχος</Tool><Tool icon={<Pdf />}>Τεύχος Υπολογισμών Δ.Π.Ε.</Tool><Tool icon={<Pdf />}>Δελτίο Δ.Π.Ε.</Tool>
      <span className="mx-1 h-5 w-px bg-[#ccc]" />
      <Tool on icon={<Ico><path d="M4 1.500h8M4 14.500h8M1.500 4v8M14.500 4v8M4 5h3M5 4v4M9 11h3M11 8v4" stroke="#111" strokeWidth="1.500" strokeDasharray="2 1" /><path d="M0 0h4v4H0z" fill="#1c1" /><path d="M12 12h4v4h-4z" fill="#e11" /><path d="M12 0h4v4h-4zM0 12h4v4H0z" fill="#0cc" /><path d="M6 6h4v4H6z" fill="#dc0" /><path d="M6 12h3v3H6zM12 6h3v3h-3z" fill="#d0c" /><path d="M.5.5h3v3h-3zM12.500.5h3v3h-3zM.5 12.500h3v3h-3zM12.500 12.500h3v3h-3z" stroke="#111" strokeWidth=".6" /></Ico>}>Χρώμα ανάλογα με ανηγμένο αξονικό φορτίο</Tool>
      <Tool on mx="ml-[3px]">Κλίμακα 0-1</Tool><Tool mx="ml-[3px]">Κλίμακα min-max</Tool>
      <span className="ml-1.5 mr-1 h-5 w-px bg-[#ccc]" />
      <Tool>Επιλεγμένα</Tool><Tool on mx="ml-0.5">Εικονιζόμενα</Tool><Tool>Όλα</Tool>
    </div>
    <div className="flex min-h-0 flex-1 justify-between overflow-hidden border border-[#606060] bg-[#f0f0f0]">
      <Results />
      <div className="w-4 border-l border-white pl-1.5 pt-4"><div className="h-[238px] w-0.5 bg-[#8a8a8a]" /></div>
    </div>
    <div className="flex h-6 shrink-0 items-start gap-[3px] pt-0.5 text-xs text-[#444]">
      <button className="flex h-[21px] items-center gap-0.5 border-b border-r border-[#b0b0b0] bg-white pl-1 pr-1.5"><Table n="1" />Παράθυρο Εργασίας 1</button>
      <button className="flex h-[21px] items-center gap-0.5 px-0.5"><Ico><path d="M3 8v7h10V8" fill="#fff3d0" stroke="#999" /><path d="M0 9l8-8 8 8" stroke="#b98a3c" strokeWidth="2" /><path d="M6 10h4v5H6z" fill="#f0a818" /></Ico>Βοήθεια</button>
      <button className="flex h-[21px] items-center gap-0.5 px-1"><Table n="2" />Παράθυρο Εργασίας 2</button>
      <button className="flex h-[21px] items-center gap-0.5 px-1"><Ico><path d="M2.500 2.500h11v13h-11z" fill="#fff" stroke="#5a4030" strokeWidth="1.500" /><path d="M6 1h4v3H6z" fill="#555" /></Ico>Εμφ. Αποτελ.</button>
    </div>
  </main>
);

/* ---------- right panel ---------- */
const bars: [number, number][] = [];
for (const y of [62, 91, 114, 160, 183, 212]) { bars.push([146, y], [243, y]); }
const Section = () => (
  <svg width="391" height="273" viewBox="0 0 391 273" className="block" fill="none" role="img" aria-label="Διατομή">
    <text x="173" y="14" fontFamily="Liberation Mono" fontSize="14" fill="#000">12Φ20</text>
    <rect x="114.500" y="28.500" width="161" height="215" stroke="#ffc000" />
    <rect x="136.500" y="50.500" width="117" height="171" rx="10" stroke="#808000" /><rect x="141.500" y="55.500" width="107" height="161" stroke="#808000" />
    <path d="M219 174l27 29q7 8 4 14M216 177l28 29M216 177l3-3M209 184l26 30q4 4 10 6M206 187l26 28q6 6 13 5M206 187l3-3" stroke="#808000" />
    {bars.map(([x, y], k) => <circle key={k} cx={x} cy={y} r="5" fill="#123012" stroke="#006a00" />)}
    <path d="M127 136.500h68.500V205" stroke="#f00" />
    <text x="122" y="150" fontFamily="Liberation Mono" fontSize="14" fill="#f00">3</text>
    <text x="0" y="0" transform="translate(208 208) rotate(-90)" fontFamily="Liberation Mono" fontSize="14" fill="#f00">2</text>
    <circle cx="15" cy="136" r="5" fill="#303012" stroke="#6a6a00" /><circle cx="15" cy="151" r="5" fill="#123012" stroke="#006a00" />
    <text x="28" y="140" fontFamily="Liberation Mono" fontSize="14" fill="#000">S220</text><text x="28" y="155" fontFamily="Liberation Mono" fontSize="14" fill="#000">S400</text>
  </svg>
);

type Prop = { k: string; v?: string; h?: boolean; off?: boolean; d?: number; open?: boolean; btn?: boolean; chk?: boolean };
const props: Prop[] = [
  { k: 'Ονοματολογία - Συνδεσμολογία', h: true }, { k: 'Όνομα', v: 'Υ15' }, { k: 'Είδος', v: 'Υποστύλωμα' }, { k: 'Κατηγορία Στοιχείου', v: 'Υφιστάμενο' }, { k: 'Στάθμη', v: 'Σ1' },
  { k: 'Κόμβος Αρχής', v: 'Κ15-Σ1', off: true }, { k: 'Κόμβος Τέλους', v: 'Κ15-Θ', off: true }, { k: 'Δευτερεύον Στοιχείο', v: 'ΟΧΙ', off: true },
  { k: 'Διατομή - Διάταξη Όπλισης', h: true }, { k: 'Διατομή', v: 'R30/40', btn: true }, { k: 'Διάταξη Όπλισης', v: 'RS1' }, { k: 'Υλικό', v: 'Γαλιά' },
  { k: 'Xcor - Διαμήκων Ράβδων:', v: '0.00' }, { k: 'Xcor - Συνδετήρων:', v: '0.00' }, { k: 'Στοιχείο Διαζωματικής Τοιχοποι...', v: 'ΟΧΙ' }, { k: 'Γωνία φ=', v: '90 °', off: true },
  { k: 'Τροποποίηση Αδρανειακών Μεγεθών', h: true, chk: true }, { k: 'Πυκνότητα Συνδετήρων (Lκρ,min = 45.0/45.0 cm)', h: true },
  { k: 'Κρίσιμη Περιοχή', v: '20.0 cm' }, { k: 'Μη Κρίσιμη Περιοχή', v: '20.0 cm' }, { k: 'Επέκταση Πύκνωσης', v: '0.0 cm/0.0 cm', d: 1, open: true },
  { k: 'Επέκταση Πύκνωσης Αρχ...', v: '0.0 cm', d: 2 }, { k: 'Επέκταση Πύκνωσης Τέλ...', v: '0.0 cm', d: 2 }, { k: 'Αυτόματος Υπολ. Γωνίας Θλιβ. ...', v: 'ΝΑΙ' },
  { k: 'Ιδιότητες Υλικών', h: true }, { k: 'Στάθμη αξιοπιστίας δεδομένων ...', v: 'γ RC' }, { k: 'Επιρροή περίσφιγξης', v: 'ΝΑΙ' }, { k: 'Ολίσθηση ράβδων οπλισμού', v: 'ΝΑΙ' },
  { k: 'Στερεοί Βραχίονες αρχής σε mm', h: true }, { k: 'Rax', v: '0', off: true },
];
const Open = () => <svg width="7" height="7" viewBox="0 0 7 7" aria-hidden="true"><path d="M6 0v6H0z" fill="#9a9a9a" /></svg>;
const PropRow = ({ p }: { p: Prop }) =>
  p.h ? (
    <div className="flex h-[17px] shrink-0 items-center whitespace-nowrap bg-[#efefef] font-['Noto_Sans'] text-xs font-bold leading-none">
      {p.chk ? (
        <label className="flex items-center"><span className="w-[22px]" /><svg width="8" height="9" viewBox="0 0 8 9" fill="none" aria-hidden="true"><path d="M1 1v7l5-3.500z" stroke="#999" /></svg>
          <input type="checkbox" className="ml-[5px] mr-1.5 size-[11px] appearance-none border border-[#aaa] bg-white" />{p.k}</label>
      ) : (<><span className="flex w-5 shrink-0 justify-center"><Open /></span>{p.k}</>)}
    </div>
  ) : (
    <div className={`flex h-[17px] shrink-0 ${p.off ? 'text-[#aaa]' : ''}`}>
      <span className={`flex shrink-0 items-center bg-[#efefef] ${p.d ? 'w-[34px] justify-end pr-1.5' : 'w-[17px]'}`}>{p.open && <Open />}</span>
      <span className={`flex shrink-0 items-center overflow-hidden whitespace-nowrap border-b border-r border-[#e6e6e6] pt-0.5 ${p.d === 2 ? 'w-[163px] pl-5' : p.d === 1 ? 'w-[163px] pl-[3px]' : 'w-[180px] pl-[3px]'}`}>{p.k}</span>
      <span className="flex flex-1 items-center justify-between border-b border-[#e6e6e6] pl-1 pt-0.5">{p.v}{p.btn && <button className="h-[15px] w-4 border border-[#888] bg-[#e6e6e6] text-[10px] leading-[10px]">...</button>}</span>
    </div>
  );

const Vs = () => <span className="mx-[5px] h-5 w-px shrink-0 bg-[#cfcfcf]" />;
const strip: React.ReactNode[] = [
  <span className="font-['Liberation_Serif'] text-lg font-bold leading-4 text-[#f5d400] [text-shadow:1px_0_#000]">i</span>,
  <Ico><ellipse cx="8" cy="3" rx="6" ry="2" fill="#ddd" stroke="#333" /><path d="M2 3v2q6 4 12 0V3M2 7v2q6 4 12 0V7M2 11v2q6 4 12 0v-2" stroke="#223" fill="#a8b4c4" /></Ico>,
  <Ico><path d="M1 1h4v10h10v4H1z" stroke="#333" /><path d="M2 5l3-3M2 9l3-3M4 14l4-3M9 14l4-3" stroke="#333" /><path d="M11 1v8M7 5h8" stroke="#2a9a3a" strokeWidth="2.500" /></Ico>,
  <Ico><rect x="1.500" y="2.500" width="11" height="12" fill="#fff" stroke="#222" /><path d="M7 5v7M4 9l3-3 3 3-3 3z" stroke="#d11" strokeWidth="1.300" /><path d="M12 1v7M9 4h7" stroke="#2a9a3a" strokeWidth="2.200" /></Ico>,
  <Ico><path d="M2 2v12h13" stroke="#223" strokeWidth="1.500" /><path d="M3 3q3 8 12 9M3 6q4 5 10 5" stroke="#a04080" /><path d="M9 2v4l3-3v4" stroke="#222" /></Ico>,
  <Ico><path d="M2 1v13h13" stroke="#222" strokeWidth="1.500" /><path d="M3 13V6l3-2v9" fill="#2a9a3a" /><path d="M7 13V8l3-3v8" fill="#ffd000" /><path d="M10 13V3h4v10" fill="#d22" /></Ico>,
  <Ico><path d="M9 1h4l-1 6-4 5-3-1z" fill="#c4571c" stroke="#7a3108" /><path d="M1 15l4-6 5 3 4 3z" fill="#444" /></Ico>,
  <Ico><path d="M6 2H3v5h3M9 8V2h4v6M9 5h4" stroke="#224" strokeWidth="1.300" /><path d="M1 10h3v5H1z" fill="#e33" /><path d="M4 10h3v5H4z" fill="#fb0" /><path d="M7 10h3v5H7z" fill="#2cc" /><path d="M10 10h4v5h-4z" fill="#d2c" /></Ico>,
  <Ico><path d="M2.500.5h8l3 3v12h-11z" fill="#e9f1fb" stroke="#456" /><path d="M5 4h5M5 6h6" stroke="#68a" /><rect x="5" y="8" width="6" height="5" fill="#48a" /></Ico>,
  <Ico><rect x="2.500" y="1.500" width="11" height="13" rx="2" fill="#fff" stroke="#622" strokeWidth="1.500" /><path d="M9 3l3 1-2 3" stroke="#c22" /></Ico>,
  <Ico><rect x="1.500" y="1.500" width="13" height="13" fill="#fff" stroke="#222" strokeWidth="1.500" /><path d="M4 4v3l3-1V4M10 4h3M3 9h4M9 8v6M4 12h3M9 11h5M11 9v5" stroke="#222" /></Ico>,
  <span className="block size-[15px] rounded-full bg-[radial-gradient(#fff_8%,transparent_60%),conic-gradient(red,magenta,blue,cyan,lime,yellow,red)]" />,
];

const RightColumn = () => (
  <aside className="relative flex w-[394px] shrink-0 flex-col">
    <span className="absolute right-1 top-2"><Ico s={8} vb={8}><path d="M6 0v8L2 4z" fill="#777" /></Ico></span>
    <h2 className="h-[44px] pl-[5px] pt-2.5 font-['Noto_Sans'] text-xl text-[#444]">Επιλεγμένα Στοιχεία</h2>
    <div className="ml-1 flex h-[26px] shrink-0 items-center bg-[#f0f0f0] pl-[9px] text-xs text-[#444]">
      <button aria-label="Επιλογή"><CursorAdd /></button><span className="ml-2 mr-[5px] h-5 w-px bg-[#cfcfcf]" />
      <Drop label="Στοιχεία" text="1 Γραμμικά Στοιχεί" w="w-[116px]" /><Vs />
      <button className="h-5 px-px pb-1 font-['Noto_Sans'] text-[10px] leading-4 text-black">img</button><Vs />
      <div className="flex items-center gap-1.5">
        <button aria-label="Όλα"><ZoomFit /></button><button aria-label="Παράθυρο"><ZoomBox /></button><span className="h-5 w-px bg-[#cfcfcf]" />
        <button aria-label="Κάτοψη" className="-mr-0.5 bg-[#cdcdcd] p-0.5"><Cube top="#5f97ee" /></button>
        <button aria-label="Πρόσοψη"><Cube front="#7fbcf5" stroke="#888" /></button><button aria-label="Πλάγια"><Cube side="#a9ccfb" stroke="#888" /></button>
        <button aria-label="Ισομετρικό"><SolidCube soft /></button><span className="h-5 w-px bg-[#cfcfcf]" /><button aria-label="Αντιγραφή"><Copy /></button>
      </div>
    </div>
    <div className="ml-[3px] mt-[3px] h-[273px] shrink-0 bg-white"><Section /></div>
    <div className="ml-px mt-1 flex h-[503px] shrink-0 bg-white">
      <div className="flex min-w-0 flex-1 flex-col overflow-hidden font-[Roboto] text-[11px] text-[#444]">{props.map((p, i) => <PropRow key={i} p={p} />)}</div>
      <div className="w-[17px] pl-[14px] pt-[17px]"><div className="h-[218px] w-0.5 bg-[#999]" /></div>
    </div>
    <div className="mt-1 min-h-0 flex-1 border-t border-[#c0c0c0] bg-[#f0f0f0]" />
    <div className="mt-1 flex h-2 shrink-0 items-center justify-center gap-[3px] bg-[#cdcdcd]">
      {Array.from({ length: 10 }, (_, i) => <span key={i} className="h-1 w-[3px] bg-[#999]" />)}
    </div>
    <div className="flex h-[30px] shrink-0 items-center justify-end bg-[#f0f0f0]">
      {strip.map((s, i) => <button key={i} aria-label={`Εργαλείο ${i + 1}`} className={`flex h-7 w-[26px] items-center justify-center ${i === 0 ? 'bg-[#d0d0d0]' : ''}`}>{s}</button>)}
      <button aria-label="Περισσότερα" className="ml-0.5 w-5 pl-1"><Ico s={12} vb={12}><path d="M2 0l2.500 2.500L2 5M6 0l2.500 2.500L6 5" stroke="#666" /><path d="M3 8h5l-2.500 3z" fill="#666" /></Ico></button>
    </div>
  </aside>
);

const StatusBar = () => (
  <footer className="grid h-[22px] shrink-0 grid-cols-[454px_519px_1fr_auto] items-center border-t border-[#c0c0c0] bg-[#f1f1f1] pt-0.5 text-xs text-[#444]">
    <a href="#" className="pl-2">www.tol.com.gr</a>
    <div className="flex items-center">
      <Table /><Ico s={12} vb={12}><path d="M3 5l3 3 3-3" stroke="#444" /></Ico><span className="w-1" />
      <Ico><path d="M0 2.500h16M0 5.500h16M0 8.500h16M0 11.500h16M0 14h16" stroke="#2c5fc0" strokeWidth="1.500" /><path d="M0 2h6v7H0z" fill="#2c5fc0" /><path d="M3 2v7M0 5h6" stroke="#fff" /></Ico>
      <span className="pl-3.5">ΕΥΡΩΚΩΔΙΚΕΣ | Στατικά Φορτία</span>
    </div>
    <div className="flex items-center gap-5 whitespace-nowrap">Αποτίμηση-Ενισχύσεις | q-Καθολ.Συντ.Συμπ. | ΟΣ: ΚΑΝ.ΕΠΕ. | ΦΤ: ΕΚ8-3
      <button aria-label="Κλείδωμα" className="border border-[#2b579a] bg-[#d0d0d0] px-0.5"><Ico><path d="M4 8V5q0-4 4-4t4 4v3" stroke="#888" strokeWidth="2" /><rect x="2" y="7" width="12" height="8" fill="#f0b93a" stroke="#b37d12" /><path d="M8 9v4" stroke="#333" strokeWidth="2" /></Ico></button>
    </div>
    <div className="flex items-center">
      <button>κάναβος</button><Ico s={12} vb={12}><path d="M3 5l3 3 3-3" stroke="#444" /></Ico><button className="px-1.5">έλξη</button>
      <button className="h-[19px] border border-[#2b579a] bg-[#cdcdcd] px-0.5">dxf</button><button className="px-1">έλξη</button>
      <button className="mx-1 h-[19px] border border-[#2b579a] bg-[#cdcdcd] px-0.5">κάθετα</button>
      <button className="w-6 text-center text-lg leading-4 text-[#999]">−</button>
      <input type="range" aria-label="Ζουμ" defaultValue={50} className="h-3.5 w-[88px] appearance-none bg-[linear-gradient(#aaa,#aaa)] bg-[length:100%_1px] bg-center bg-no-repeat [&::-webkit-slider-thumb]:h-3.5 [&::-webkit-slider-thumb]:w-[5px] [&::-webkit-slider-thumb]:appearance-none [&::-webkit-slider-thumb]:bg-[#707070]" />
      <button className="w-5 text-center text-lg leading-4 text-[#999]">+</button>
    </div>
  </footer>
);

export default function App() {
  return (
    <div className="flex h-screen flex-col overflow-hidden bg-[#e6e6e6] font-[Roboto,'Noto_Sans',sans-serif]">
      <TitleBar />
      <Ribbon />
      <div className="flex min-h-0 flex-1 gap-[5px]">
        <LeftColumn />
        <Center />
        <RightColumn />
      </div>
      <StatusBar />
    </div>
  );
}
